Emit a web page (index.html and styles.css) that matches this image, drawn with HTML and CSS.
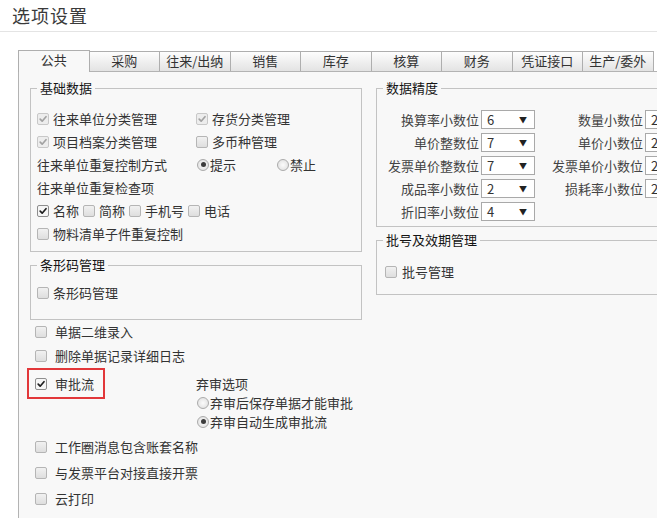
FILE: index.html
```html
<!DOCTYPE html>
<html lang="zh-CN">
<head>
<meta charset="utf-8">
<title>选项设置</title>
<link rel="stylesheet" href="styles.css">
</head>
<body>
<header class="header"><h1 class="title">选项设置</h1></header>
<nav class="tabs">
  <div class="tab active">公共</div>
  <div class="tab">采购</div>
  <div class="tab">往来/出纳</div>
  <div class="tab">销售</div>
  <div class="tab">库存</div>
  <div class="tab">核算</div>
  <div class="tab">财务</div>
  <div class="tab">凭证接口</div>
  <div class="tab">生产/委外</div>
</nav>
<main class="panel">
  <div class="col-left">
    <section class="group">
      <div class="group-title">基础数据</div>
      <div class="basic">
        <label class="item"><span class="cb dis-on"><svg viewBox="0 0 12 12"><path d="M2.6 6.2 L5 8.6 L9.6 3.2"/></svg></span>往来单位分类管理</label>
        <label class="item span2"><span class="cb dis-on"><svg viewBox="0 0 12 12"><path d="M2.6 6.2 L5 8.6 L9.6 3.2"/></svg></span>存货分类管理</label>
        <label class="item"><span class="cb dis-on"><svg viewBox="0 0 12 12"><path d="M2.6 6.2 L5 8.6 L9.6 3.2"/></svg></span>项目档案分类管理</label>
        <label class="item span2"><span class="cb"></span>多币种管理</label>
        <div class="item">往来单位重复控制方式</div>
        <label class="item radio"><span class="rb on"></span>提示</label>
        <label class="item radio"><span class="rb"></span>禁止</label>
        <div class="item span3">往来单位重复检查项</div>
        <div class="item span3 inline">
          <label class="item"><span class="cb on"><svg viewBox="0 0 12 12"><path d="M2.6 6.2 L5 8.6 L9.6 3.2"/></svg></span>名称</label>
          <label class="item"><span class="cb"></span>简称</label>
          <label class="item"><span class="cb"></span>手机号</label>
          <label class="item"><span class="cb"></span>电话</label>
        </div>
        <label class="item span3"><span class="cb"></span>物料清单子件重复控制</label>
      </div>
    </section>
    <section class="group barcode">
      <div class="group-title">条形码管理</div>
      <div class="single">
        <label class="item"><span class="cb"></span>条形码管理</label>
      </div>
    </section>
    <div class="opts">
      <label class="opt"><span class="cb"></span>单据二维录入</label>
      <label class="opt"><span class="cb"></span>删除单据记录详细日志</label>
      <div class="approval">
        <label class="redbox"><span class="cb on"><svg viewBox="0 0 12 12"><path d="M2.6 6.2 L5 8.6 L9.6 3.2"/></svg></span>审批流</label>
        <div class="abandon">
          <div class="ab-title">弃审选项</div>
          <label class="item radio-row"><span class="rb"></span>弃审后保存单据才能审批</label>
          <label class="item radio-row"><span class="rb on"></span>弃审自动生成审批流</label>
        </div>
      </div>
      <label class="opt tall first"><span class="cb"></span>工作圈消息包含账套名称</label>
      <label class="opt tall"><span class="cb"></span>与发票平台对接直接开票</label>
      <label class="opt tall"><span class="cb"></span>云打印</label>
    </div>
  </div>
  <div class="col-right">
    <section class="group">
      <div class="group-title">数据精度</div>
      <div class="prec">
        <span class="lbl">换算率小数位</span><span class="sel"><span>6</span><span class="arr">▼</span></span>
        <span class="lbl">数量小数位</span><span class="sel"><span>2</span><span class="arr">▼</span></span>
        <span class="lbl">单价整数位</span><span class="sel"><span>7</span><span class="arr">▼</span></span>
        <span class="lbl">单价小数位</span><span class="sel"><span>2</span><span class="arr">▼</span></span>
        <span class="lbl">发票单价整数位</span><span class="sel"><span>7</span><span class="arr">▼</span></span>
        <span class="lbl">发票单价小数位</span><span class="sel"><span>2</span><span class="arr">▼</span></span>
        <span class="lbl">成品率小数位</span><span class="sel"><span>2</span><span class="arr">▼</span></span>
        <span class="lbl">损耗率小数位</span><span class="sel"><span>2</span><span class="arr">▼</span></span>
        <span class="lbl">折旧率小数位</span><span class="sel"><span>4</span><span class="arr">▼</span></span>
      </div>
    </section>
    <section class="group batch-group">
      <div class="group-title">批号及效期管理</div>
      <div class="batch">
        <label class="item"><span class="cb"></span>批号管理</label>
      </div>
    </section>
  </div>
</main>
</body>
</html>
```
FILE: styles.css
```css
* { box-sizing: border-box; margin: 0; padding: 0; }
html, body { width: 657px; height: 518px; overflow: hidden; background: #fff; }
body {
  font-family: "Noto Sans CJK SC", "Microsoft YaHei", sans-serif;
  font-size: 13px;
  color: #333;
  line-height: 18px;
}

.header { height: 32px; border-bottom: 1px solid #e4e4e4; padding-left: 12px; }
.title { font-size: 18px; font-weight: normal; line-height: 30px; color: #3a3a3a; letter-spacing: 1px; }

.tabs { display: flex; align-items: flex-end; height: 21px; margin: 18px 0 0 18px; }
.tab {
  width: 71.5px; height: 20px; margin-left: -1px;
  border: 1px solid #aeaeae; border-bottom: none;
  background: linear-gradient(#fdfdfd, #e3e3e3);
  text-align: center; line-height: 18px; font-size: 13px; color: #333;
  flex: none;
}
.tab:first-child { margin-left: 0; }
.tab.active { height: 22px; margin-bottom: -1px; background: #f8f8f8; position: relative; z-index: 1; }

.panel {
  display: flex; gap: 14px;
  width: 740px; height: 460px;
  margin-left: 18px;
  border: 1px solid #b3b3b3;
  background: #f8f8f8;
  padding: 16px 0 0 11px;
}
.col-left { width: 332px; flex: none; }
.col-right { width: 340px; flex: none; }

.group { border: 1px solid #c3c3c3; }
.group-title {
  display: table; margin: -9px 0 0 6px; padding: 0 3px;
  background: #f8f8f8; line-height: 16px; color: #151515;
}

.item { display: flex; align-items: center; white-space: nowrap; }
.cb {
  width: 12px; height: 12px; flex: none; margin-right: 4px;
  border: 1px solid #b5b5b5; border-radius: 2px;
  background: linear-gradient(#f1f1f1, #dedede);
  display: flex; align-items: center; justify-content: center;
}
.cb svg { width: 10px; height: 10px; fill: none; stroke-width: 2; stroke-linecap: round; stroke-linejoin: round; }
.cb.dis-on { border-color: #c8c8c8; background: #ededed; }
.cb.dis-on svg { stroke: #a2a2a2; }
.cb.on { border-color: #8e8e8e; background: #f6f6f6; }
.cb.on svg { stroke: #1e1e1e; }

.rb {
  width: 12px; height: 12px; flex: none; margin-right: 1px;
  border: 1px solid #ababab; border-radius: 50%;
  background: radial-gradient(#fbfbfb, #dcdcdc);
  display: flex; align-items: center; justify-content: center;
}
.rb.on::after { content: ""; width: 5px; height: 5px; border-radius: 50%; background: #3c3c3c; }

.basic {
  display: grid; grid-template-columns: 159px 80px auto; grid-auto-rows: 23px;
  align-items: center; margin-top: 11px; padding: 0 0 6px 6px;
}
.span2 { grid-column: span 2; }
.span3 { grid-column: span 3; }
.radio .rb { margin-left: 1px; }
.inline { gap: 4px; }

.barcode { margin-top: 13px; }
.single { height: 23px; display: flex; align-items: center; margin-top: 8px; padding: 0 0 0 6px; margin-bottom: 15px; }

.opts { padding-left: 5px; }
.opt { height: 24px; display: flex; align-items: center; white-space: nowrap; }
.opt .cb { margin-right: 8px; }
.opt.tall { height: 26px; }
.opt.first { margin-top: 3px; }

.approval { display: flex; align-items: flex-start; height: 63px; }
.redbox {
  display: flex; align-items: center; flex: none;
  width: 78px; height: 31px; margin-left: -8px; padding-left: 6px;
  border: 2px solid #e2373a;
}
.redbox .cb { margin-right: 8px; }
.abandon { margin-left: 91px; padding-top: 6px; }
.ab-title { line-height: 19px; }
.radio-row { height: 19px; padding-left: 1px; }

.prec {
  display: grid; grid-template-columns: 104px 54px 110px 54px; grid-auto-rows: 23px;
  align-items: center; margin-top: 12px; padding-bottom: 3px;
}
.lbl { text-align: right; padding-right: 2px; white-space: nowrap; color: #444; }
.sel {
  height: 19px; border: 1px solid #a9a9a9; background: #fff;
  display: flex; align-items: center; justify-content: space-between;
  padding: 0 7px 0 5px; color: #333;
}
.arr { font-size: 8px; color: #222; }

.batch-group { margin-top: 13px; }
.batch { height: 23px; display: flex; align-items: center; margin-top: 12px; padding-left: 8px; margin-bottom: 11px; }
.batch .cb { margin-right: 5px; }
```
